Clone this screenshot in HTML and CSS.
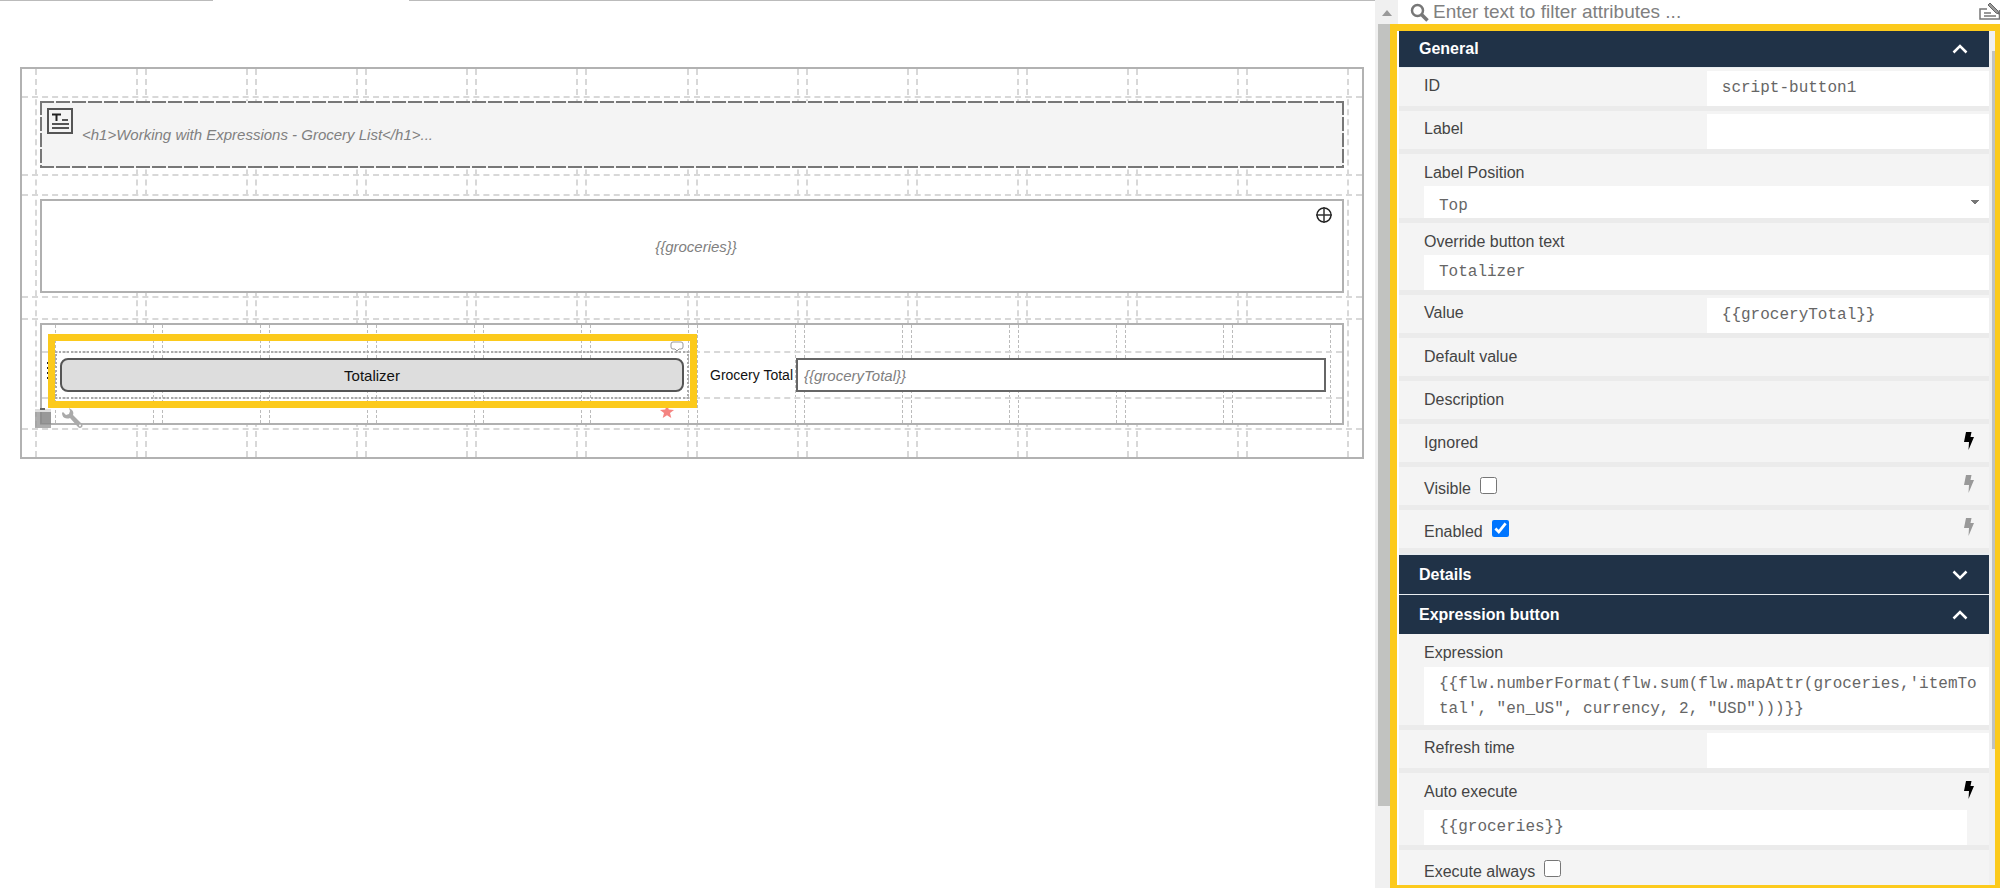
FILE: index.html
```html
<!DOCTYPE html>
<html lang="en">
<head>
    <meta charset="UTF-8">
    <meta name="viewport" content="width=device-width, initial-scale=1.0">
    <title>Form designer</title>
    <link rel="stylesheet" href="styles.css">
</head>
<body>
    <!-- shared icons -->
    <svg class="sprite" aria-hidden="true">
        <symbol id="bolt" viewBox="0 0 10 18"><path d="M2 0h5.500L6.500 5H10L4.500 18l.5-8H0z" fill="currentColor"/></symbol>
        <symbol id="up" viewBox="0 0 16 10"><path d="M1.500 8.500L8 2l6.500 6.500" fill="none" stroke="currentColor" stroke-width="2.500"/></symbol>
        <symbol id="down" viewBox="0 0 16 10"><path d="M1.500 1.500L8 8l6.500-6.500" fill="none" stroke="currentColor" stroke-width="2.500"/></symbol>
    </svg>

    <div class="designer">
        <main class="workspace">
            <div class="tab-line"><span class="tab-before"></span><span class="tab-active"></span><span class="tab-after"></span></div>

            <div class="form-canvas">
                <div class="guides">
                    <i></i><i></i><i></i><i></i><i></i><i></i><i></i><i></i><i></i><i></i><i></i><i></i>
                </div>
                <div class="rows">
                    <div class="row row-text">
                        <div class="html-text">
                            <svg class="text-icon" viewBox="0 0 26 26">
                                <rect x="1" y="1" width="24" height="24" fill="#f4f4f4" stroke="#555" stroke-width="2"/>
                                <path d="M5 6.500h9M9.500 6v7" stroke="#222" stroke-width="2"/>
                                <path d="M15 12h6M5 16h17M5 20h17" stroke="#555" stroke-width="2"/>
                            </svg>
                            <span>&lt;h1&gt;Working with Expressions - Grocery List&lt;/h1&gt;...</span>
                        </div>
                    </div>
                    <div class="row row-subform">
                        <div class="subform">
                            <span>{{groceries}}</span>
                            <svg class="cross-icon" viewBox="0 0 18 18">
                                <circle cx="9" cy="9" r="7" fill="none" stroke="#222" stroke-width="1.500"/>
                                <path d="M1 9h16M9 1v16" stroke="#333" stroke-width="1.500"/>
                            </svg>
                        </div>
                    </div>
                    <div class="row row-panel">
                        <div class="panel">
                            <div class="guides guides-inner">
                                <i></i><i></i><i></i><i></i><i></i><i></i><i></i><i></i><i></i><i></i><i></i><i></i>
                            </div>
                            <div class="panel-row">
                                <div class="cell selected">
                                    <button class="preview-button" type="button">Totalizer</button>
                                    <svg class="tool comment" viewBox="0 0 14 11"><path d="M3 1h8q2 0 2 2v3q0 2-2 2H9l-2 2-2-2H3Q1 8 1 6V3q0-2 2-2z" fill="#fff" stroke="#999"/></svg>
                                    <svg class="tool grip" viewBox="0 0 2 20"><path d="M1 1v18" stroke="#222" stroke-width="2" stroke-dasharray="2 3"/></svg>
                                    <svg class="tool trash" viewBox="0 0 16 20"><path d="M0 4h16v16H0z" fill="#999" fill-opacity=".8"/><path d="M0 1h16v3H0z" fill="#ddd"/><path d="M5 4h11v12H5z" fill="#777" fill-opacity=".4"/><path d="M5 1h5" stroke="#666" stroke-width="2"/></svg>
                                    <svg class="tool wrench" viewBox="0 0 22 20"><path d="M1 5q0 5 5 5.500 2 0 3-.5l8 9q2 2 4 0 1-1 0-3l-9-9q1-3-1-5L8 0l1 3-1 3-3 1-3-3z" fill="#aaa"/><circle cx="19" cy="17.500" r="1" fill="#fff"/></svg>
                                    <svg class="tool star" viewBox="0 0 14 13"><path d="M7 0l1.800 4.500 5.200.4-4 3.200 1.300 4.900L7 10.300 2.700 13 4 8.100 0 4.900l5.200-.4z" fill="#f48481"/></svg>
                                </div>
                                <div class="cell field">
                                    <label for="grocery-total">Grocery Total</label>
                                    <input id="grocery-total" type="text" placeholder="{{groceryTotal}}">
                                </div>
                            </div>
                        </div>
                    </div>
                </div>
            </div>
        </main>

        <div class="scrollbar">
            <svg class="arrow" viewBox="0 0 10 6"><path d="M0 6l5-6 5 6z" fill="#999"/></svg>
            <div class="thumb"></div>
        </div>

        <aside class="attributes">
            <div class="filter">
                <svg class="search-icon" viewBox="0 0 19 19"><circle cx="7.500" cy="7.500" r="5.500" fill="none" stroke="#777" stroke-width="2.500"/><path d="M11.500 11.500l6 6" stroke="#777" stroke-width="3.500"/></svg>
                <input type="text" aria-label="Filter attributes" placeholder="Enter text to filter attributes ...">
                <svg class="edit-icon" viewBox="0 0 21 18"><path d="M8 6H1v10h19.500V7" fill="none" stroke="#777" stroke-width="1.500"/><path d="M5 10h7M5 13h12" stroke="#777" stroke-width="1.500"/><path d="M9 2l8 8 3 1-1-3-8-8z" fill="#999" stroke="#666"/></svg>
            </div>

            <div class="attribute-box">
                <form class="sections">
                    <button class="section-title first" type="button">General <svg class="chevron"><use href="#up"/></svg></button>
                    <div class="section-body">
                        <div class="attr split"><label for="id">ID</label><input id="id" type="text" value="script-button1"></div>
                        <div class="attr split"><label for="label">Label</label><input id="label" type="text"></div>
                        <div class="attr stacked">
                            <label for="position">Label Position</label>
                            <select id="position"><option>Top</option></select>
                        </div>
                        <div class="attr stacked"><label for="text">Override button text</label><input id="text" type="text" value="Totalizer"></div>
                        <div class="attr split"><label for="value">Value</label><input id="value" type="text" value="{{groceryTotal}}"></div>
                        <div class="attr"><span>Default value</span></div>
                        <div class="attr"><span>Description</span></div>
                        <div class="attr"><span>Ignored</span><svg class="bolt on"><use href="#bolt"/></svg></div>
                        <div class="attr check"><label for="visible">Visible</label><input id="visible" type="checkbox"><svg class="bolt"><use href="#bolt"/></svg></div>
                        <div class="attr check"><label for="enabled">Enabled</label><input id="enabled" type="checkbox" checked><svg class="bolt"><use href="#bolt"/></svg></div>
                    </div>
                    <button class="section-title" type="button">Details <svg class="chevron"><use href="#down"/></svg></button>
                    <button class="section-title" type="button">Expression button <svg class="chevron"><use href="#up"/></svg></button>
                    <div class="section-body">
                        <div class="attr stacked">
                            <label for="expression">Expression</label>
                            <textarea id="expression" rows="2">{{flw.numberFormat(flw.sum(flw.mapAttr(groceries,'itemTotal', "en_US", currency, 2, "USD")))}}</textarea>
                        </div>
                        <div class="attr split"><label for="refresh">Refresh time</label><input id="refresh" type="text"></div>
                        <div class="attr stacked auto">
                            <label for="auto">Auto execute</label><svg class="bolt on"><use href="#bolt"/></svg>
                            <input id="auto" type="text" value="{{groceries}}">
                        </div>
                        <div class="attr check"><label for="always">Execute always</label><input id="always" type="checkbox"></div>
                    </div>
                </form>
                <div class="scroll-track"><div class="scroll-thumb"></div></div>
            </div>
        </aside>
    </div>
</body>
</html>
```

FILE: styles.css
```css
* {
    box-sizing: border-box;
}
body {
    margin: 0;
    font-family: "Liberation Sans", Arial, sans-serif;
    font-size: 15px;
    color: #111;
    background-color: #fff;
}
input, select, textarea, button {
    font: inherit;
    margin: 0;
    border: none;
    border-radius: 0;
    outline: none;
}
.sprite {
    display: none;
}
.designer {
    display: flex;
    height: 100vh;
    overflow: hidden;
}

/* form canvas */
.workspace {
    flex: 1;
    min-width: 0;
}
.tab-line {
    display: flex;
    height: 67px;
}
.tab-before, .tab-after {
    height: 1px;
    background-color: #bbb;
}
.tab-before {
    width: 213px;
}
.tab-active {
    width: 196px;
}
.tab-after {
    flex: 1;
}
.form-canvas {
    display: grid;
    margin: 0 11px 0 20px;
    border: 2px solid #b2b2b2;
}
.guides, .rows {
    grid-area: 1 / 1;
    min-width: 0;
}
.guides {
    display: grid;
    grid-template-columns: repeat(12, 1fr);
    gap: 7px;
    padding: 0 13px;
}
.guides i {
    border: 2px dashed #d8d8d8;
    border-width: 0 2px;
}
.row {
    padding: 3px 18px;
    border: 2px dashed #d8d8d8;
    border-width: 2px 0;
}
.row-text {
    margin-top: 27px;
    padding-bottom: 6px;
}
.row-subform {
    margin-top: 18px;
}
.row-panel {
    margin: 20px 0 27px;
}
.html-text {
    display: flex;
    height: 67px;
    padding: 7px;
    color: #808080;
    font-style: italic;
    background:
        repeating-linear-gradient(90deg, #777 0 14px, transparent 14px 16px) top / 100% 2px no-repeat,
        repeating-linear-gradient(90deg, #777 0 14px, transparent 14px 16px) bottom / 100% 2px no-repeat,
        repeating-linear-gradient(#777 0 14px, transparent 14px 16px) left / 2px 100% no-repeat,
        repeating-linear-gradient(#777 0 14px, transparent 14px 16px) right / 2px 100% no-repeat,
        #f4f4f4;
}
.html-text span {
    align-self: center;
    margin-left: 9px;
}
.text-icon {
    width: 26px;
    height: 26px;
}
.subform {
    position: relative;
    display: flex;
    align-items: center;
    justify-content: center;
    height: 94px;
    background-color: #fff;
    border: 2px solid #b0b0b0;
    font-style: italic;
    color: #808080;
}
.subform span {
    margin-left: 8px;
}
.cross-icon {
    position: absolute;
    top: 5px;
    right: 9px;
    width: 18px;
    height: 18px;
}
.panel {
    display: grid;
    background-color: #fff;
    border: 2px solid #b0b0b0;
}
.guides-inner {
    gap: 8px;
    padding-right: 11px;
}
.guides-inner i {
    border-width: 0 1px;
    border-color: #bbb;
}
.panel-row {
    grid-area: 1 / 1;
    display: grid;
    grid-template-columns: 1fr 1fr;
    gap: 8px;
    height: 48px;
    margin: 26px 0 24px;
    padding: 0 11px 0 13px;
    border: 2px dashed #d8d8d8;
    border-width: 2px 0;
}
.cell {
    display: flex;
    align-items: center;
}
.selected {
    position: relative;
    margin: -2px 0;
    padding: 0 3px;
    border: 2px dotted #aaa;
}
.selected::after {
    content: "";
    position: absolute;
    inset: -19px -10px -11px -9px;
    border: 7px solid #fcca1c;
    pointer-events: none;
}
.preview-button {
    flex: 1;
    height: 34px;
    background-color: #ddd;
    border: 2px solid #555;
    border-radius: 8px;
    color: #111;
}
.tool {
    position: absolute;
}
.comment {
    top: -12px;
    right: 3px;
    width: 14px;
    height: 11px;
}
.grip {
    top: 8px;
    left: -10px;
    width: 2px;
    height: 20px;
}
.trash {
    top: 55px;
    left: -22px;
    width: 16px;
    height: 20px;
}
.wrench {
    top: 55px;
    left: 4px;
    width: 22px;
    height: 20px;
}
.star {
    top: 52px;
    right: 13px;
    width: 14px;
    height: 13px;
}
.field label {
    flex: none;
    width: 99px;
    padding-left: 13px;
    font-size: 14px;
    white-space: nowrap;
}
.field input {
    flex: 1;
    min-width: 0;
    height: 34px;
    margin-right: 5px;
    padding: 0 6px;
    border: 2px solid #666;
    background-color: #fff;
}
.field input::placeholder {
    color: #808080;
    font-style: italic;
}

/* canvas scrollbar */
.scrollbar {
    width: 23px;
    padding-left: 3px;
    background-color: #f0f0f0;
}
.arrow {
    display: block;
    width: 10px;
    height: 6px;
    margin: 10px 0 8px 4px;
}
.thumb {
    height: 782px;
    background-color: #c1c2c0;
}

/* attribute panel */
.attributes {
    display: flex;
    flex-direction: column;
    width: 602px;
    color: #444;
    font-size: 16px;
}
.filter {
    display: flex;
    align-items: center;
    flex: none;
    height: 24px;
    padding-left: 12px;
}
.filter input {
    flex: 1;
    min-width: 0;
    padding: 0 4px;
    font-size: 19px;
}
.filter input::placeholder {
    color: #808080;
}
.search-icon {
    width: 19px;
    height: 19px;
}
.edit-icon {
    width: 21px;
    height: 18px;
}
.attribute-box {
    display: flex;
    flex: 1;
    min-height: 0;
    margin-left: -8px;
    border: solid #fcca1c;
    border-width: 7px 5px 3px 7px;
    background-color: #fff;
}
.sections {
    flex: 1;
    min-width: 0;
    margin-left: 2px;
    overflow: hidden;
    background-color: #e9edf0;
}
.section-title {
    display: flex;
    align-items: center;
    justify-content: space-between;
    width: 100%;
    height: 39px;
    padding: 0 21px 0 20px;
    background-color: #203247;
    color: #fff;
    font-weight: bold;
    cursor: pointer;
}
.section-title.first {
    height: 36px;
    margin-bottom: 1px;
}
.section-title + .section-title {
    margin-top: 1px;
}
.section-body + .section-title {
    margin-top: 2px;
}
.chevron {
    width: 16px;
    height: 10px;
}
.attr {
    display: flex;
    align-items: center;
    height: 43px;
    padding-left: 25px;
    background-color: #f4f4f4;
    border-bottom: 5px solid #ebebeb;
}
.attr input, .attr select, .attr textarea {
    padding: 0 9px 2px 15px;
    background-color: #fff;
    color: #666;
    font-family: "Liberation Mono", monospace;
}
.split {
    display: grid;
    grid-template-columns: 12fr 11fr;
    padding: 3px 0 0;
}
.split label {
    padding: 0 0 6px 25px;
}
.split input {
    height: 35px;
    min-width: 0;
}
.stacked {
    display: grid;
    grid-template-columns: 1fr auto;
    height: auto;
}
.stacked label {
    height: 32px;
    line-height: 37px;
}
.stacked input, .stacked select, .stacked textarea {
    grid-column: 1 / -1;
    width: 100%;
    height: 35px;
}
.stacked select {
    height: 32px;
    padding-top: 9px;
    appearance: none;
    background: linear-gradient(to bottom right, #777 50%, transparent 50%) right 10px center / 4px 5px no-repeat,
        linear-gradient(to bottom left, #777 50%, transparent 50%) right 14px center / 4px 5px no-repeat,
        #fff;
}
.stacked textarea {
    height: 58px;
    margin-top: 1px;
    padding-top: 5px;
    line-height: 25px;
    word-break: break-all;
    resize: none;
    overflow: hidden;
}
.auto {
    padding-right: 22px;
}
.auto label {
    height: 37px;
}
.check label {
    padding-top: 5px;
}
.check input {
    width: 17px;
    height: 17px;
    margin: 0 0 2px 9px;
}
.bolt {
    width: 10px;
    height: 18px;
    margin: 0 15px 4px auto;
    color: #999;
}
.bolt.on {
    color: #000;
}
.auto .bolt {
    margin: 0 -7px 4px 0;
}
.scroll-track {
    width: 6px;
    padding: 20px 0 0 3px;
    background-color: #f0f0f0;
}
.scroll-thumb {
    height: 698px;
    background-color: #c1c2c0;
}
```
